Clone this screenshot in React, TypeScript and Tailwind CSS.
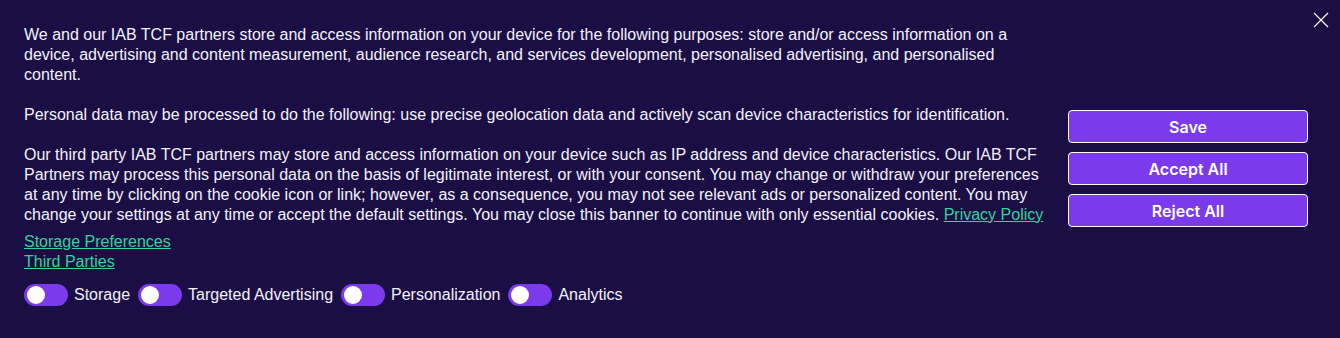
import React from "react";

function Toggle({ label }: { label: string }) {
  return (
    <div className="flex items-center">
      <div className="flex h-[22px] w-[44px] items-center rounded-full bg-[#7c3aed] px-[3px]">
        <div className="h-[18px] w-[18px] rounded-full bg-white" />
      </div>
      <span className="ml-[6px] mr-[8px]">{label}</span>
    </div>
  );
}

export default function App() {
  return (
    <div
      className="relative flex min-h-[338px] w-full items-center bg-[#1a0e45] pl-6 pr-8 pt-6 pb-8 text-[16px] leading-[20px] text-[#f4f2fa]"
      style={{ fontFamily: '"Liberation Sans", Arial, sans-serif' }}
    >
      <button className="absolute right-[11px] top-[11px] flex h-[17px] w-[17px] items-center justify-center text-white">
        <svg width="16" height="16" viewBox="0 0 16 16" fill="none" stroke="white" strokeWidth="1.2">
          <path d="M1 1 L15 15 M15 1 L1 15" />
        </svg>
      </button>
      <div className="w-[1024px] shrink-0">
        <p>
          We and our IAB TCF partners store and access information on your device for the following purposes: store and/or access information on a device, advertising and content measurement, audience research, and services development, personalised advertising, and personalised content.
        </p>
        <p className="mt-5">
          Personal data may be processed to do the following: use precise geolocation data and actively scan device characteristics for identification.
        </p>
        <p className="mt-5">
          Our third party IAB TCF partners may store and access information on your device such as IP address and device characteristics. Our IAB TCF Partners may process this personal data on the basis of legitimate interest, or with your consent. You may change or withdraw your preferences at any time by clicking on the cookie icon or link; however, as a consequence, you may not see relevant ads or personalized content. You may change your settings at any time or accept the default settings. You may close this banner to continue with only essential cookies.{" "}
          <a href="#" className="text-[#34d399] underline">Privacy Policy</a>
        </p>
        <div className="mt-[7px] flex flex-col items-start">
          <a href="#" className="text-[#34d399] underline">Storage Preferences</a>
          <a href="#" className="text-[#34d399] underline">Third Parties</a>
        </div>
        <div className="mt-[12px] flex items-center">
          <Toggle label="Storage" />
          <Toggle label="Targeted Advertising" />
          <Toggle label="Personalization" />
          <Toggle label="Analytics" />
        </div>
      </div>
      <div className="ml-5 mt-[7px] flex w-[240px] shrink-0 flex-col gap-[9px]" style={{ fontFamily: 'Inter, "Liberation Sans", sans-serif' }}>
        <button className="h-[33px] rounded-[4px] border border-white bg-[#7c3aed] font-semibold text-white">Save</button>
        <button className="h-[33px] rounded-[4px] border border-white bg-[#7c3aed] font-semibold text-white">Accept All</button>
        <button className="h-[33px] rounded-[4px] border border-white bg-[#7c3aed] font-semibold text-white">Reject All</button>
      </div>
    </div>
  );
}
